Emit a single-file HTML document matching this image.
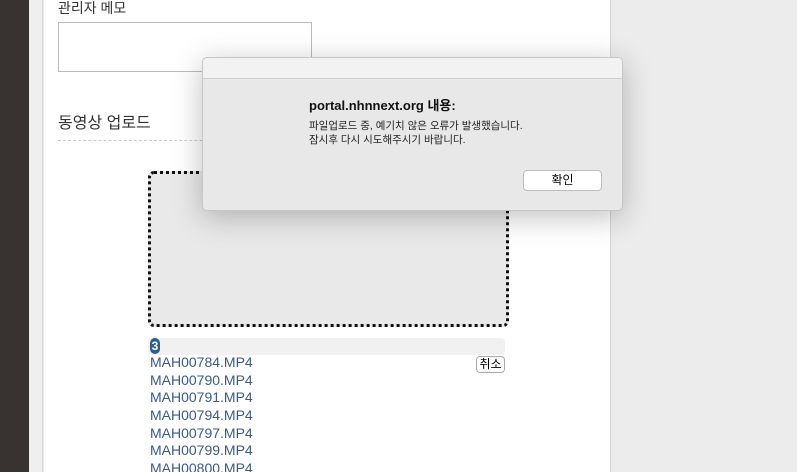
<!DOCTYPE html>
<html><head><meta charset="utf-8"><style>
*{margin:0;padding:0;box-sizing:border-box}
html,body{width:797px;height:472px;overflow:hidden}
body{position:relative;background:#ececec;font-family:"Liberation Sans","Noto Sans CJK KR",sans-serif}
.dark{position:absolute;left:0;top:0;width:29px;height:472px;background:#383330}
.gutter{position:absolute;left:29px;top:0;width:14px;height:472px;background:#efefef;border-right:1px solid #d8d8d8}
.panel{position:absolute;left:44px;top:0;width:567px;height:472px;background:#fff;border-right:1px solid #d4d4d4}
.t{position:absolute;color:#333;white-space:nowrap}
.memo{position:absolute;left:58px;top:22px;width:254px;height:50px;border:1px solid #bbb}
.dash{position:absolute;left:58px;top:140px;width:200px;border-top:1px dashed #ccc}
.drop{position:absolute;left:148px;top:171px;width:361px;height:156px;border:3px dotted #111;border-radius:6px;background:#e9e9e9}
.bar{position:absolute;left:148px;top:338px;width:357px;height:17px;background:#f1f1f1;border-radius:4px}
.num{position:absolute;left:150px;top:338px;width:10px;height:16px;background:#2d5f8a;color:#fff;font-size:12px;font-weight:bold;border-radius:5px;text-align:center;line-height:16px}
.f{position:absolute;left:150px;font-size:14px;color:#3c5a80}
.cancel{position:absolute;left:476px;top:356px;width:29px;height:17px;border:1px solid #aaa;border-radius:4px;font-size:12px;text-align:center;line-height:15px;background:#fff}
.dlg{position:absolute;left:202px;top:57px;width:421px;height:154px;background:#e8e8e8;border:1px solid #c6c6c6;border-radius:5px;box-shadow:0 6px 30px rgba(0,0,0,.25);overflow:hidden}
.tb{height:21px;background:#f2f2f2;border-bottom:1px solid #cfcfcf}
.btn{position:absolute;left:320px;top:112px;width:79px;height:21px;background:#fff;border:1px solid #bdbdbd;border-radius:4px;font-size:12px;text-align:center;line-height:19px}
</style></head><body>
<div class="dark"></div><div class="gutter"></div><div class="panel"></div>
<div class="t" style="left:58px;top:-2px;font-size:14px">관리자 메모</div>
<div class="memo"></div>
<div class="t" style="left:58px;top:109px;font-size:16px">동영상 업로드</div>
<div class="dash"></div>
<div class="drop"></div>
<div class="bar"></div><div class="num">3</div>
<div class="f" style="top:354px">MAH00784.MP4</div>
<div class="f" style="top:372px">MAH00790.MP4</div>
<div class="f" style="top:389px">MAH00791.MP4</div>
<div class="f" style="top:407px">MAH00794.MP4</div>
<div class="f" style="top:425px">MAH00797.MP4</div>
<div class="f" style="top:442px">MAH00799.MP4</div>
<div class="f" style="top:460px">MAH00800.MP4</div>
<div class="cancel">취소</div>
<div class="dlg"><div class="tb"></div>
<div class="t" style="left:106px;top:37px;font-size:13px;font-weight:bold;color:#111">portal.nhnnext.org 내용:</div>
<div class="t" style="left:106px;top:61px;font-size:10.5px;color:#222;line-height:14px">파일업로드 중, 예기치 않은 오류가 발생했습니다.<br>잠시후 다시 시도해주시기 바랍니다.</div>
<div class="btn">확인</div>
</div>
</body></html>
